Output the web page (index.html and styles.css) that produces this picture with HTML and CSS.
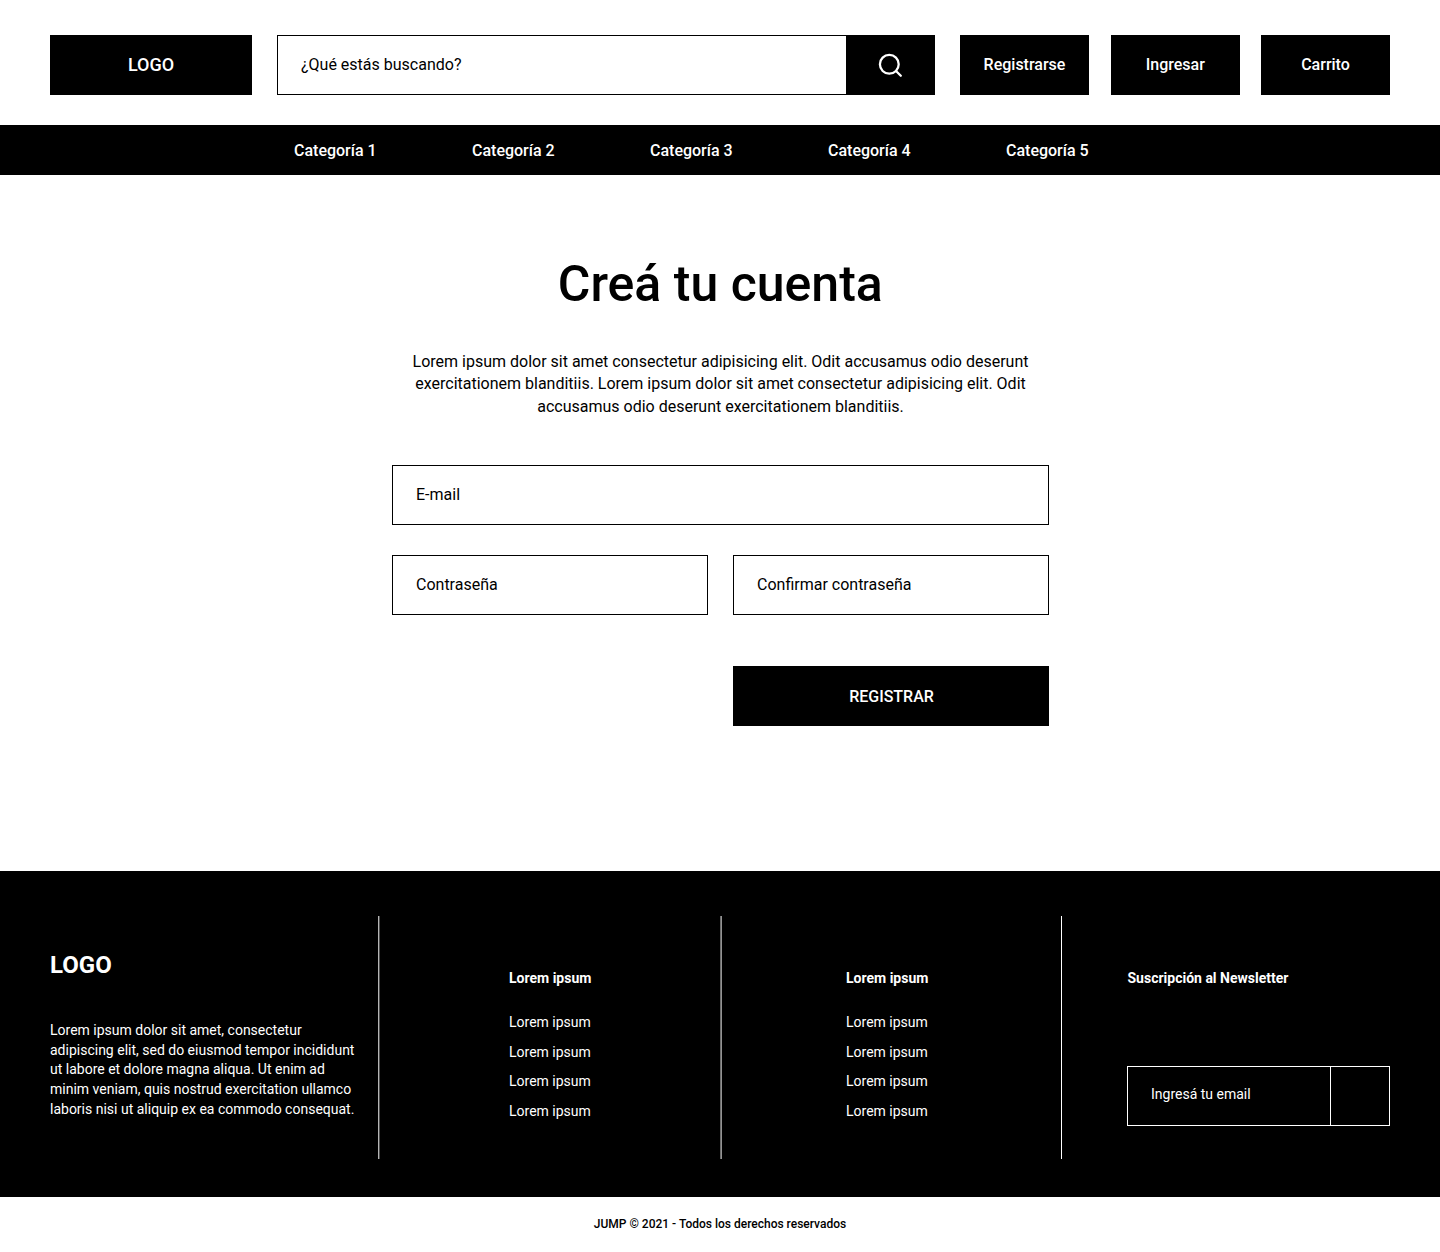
FILE: index.html
```html
<!DOCTYPE html>
<html lang="es">
<head>
<meta charset="utf-8">
<title>Creá tu cuenta</title>
<link rel="stylesheet" href="styles.css">
</head>
<body>
<header class="header">
  <a class="logo">LOGO</a>
  <form class="search">
    <span class="search-field">¿Qué estás buscando?</span>
    <span class="search-button">
      <svg width="26" height="26" viewBox="0 0 26 26" fill="none" stroke="#fff" stroke-width="2.3" stroke-linecap="round"><circle cx="12.3" cy="12.3" r="9.4"/><path d="M19 19L23.8 23.8"/></svg>
    </span>
  </form>
  <div class="actions">
    <a class="action">Registrarse</a>
    <a class="action action-login">Ingresar</a>
    <a class="action">Carrito</a>
  </div>
</header>
<nav class="nav">
  <a>Categoría 1</a><a>Categoría 2</a><a>Categoría 3</a><a>Categoría 4</a><a>Categoría 5</a>
</nav>
<main class="main">
  <h1 class="title">Creá tu cuenta</h1>
  <p class="intro">Lorem ipsum dolor sit amet consectetur adipisicing elit. Odit accusamus odio deserunt<br>exercitationem blanditiis. Lorem ipsum dolor sit amet consectetur adipisicing elit. Odit<br>accusamus odio deserunt exercitationem blanditiis.</p>
  <form class="form">
    <div class="field field-wide">E-mail</div>
    <div class="field">Contraseña</div>
    <div class="field">Confirmar contraseña</div>
    <div class="submit">REGISTRAR</div>
  </form>
</main>
<footer class="footer">
  <section class="about">
    <h2 class="footer-logo">LOGO</h2>
    <p class="about-text">Lorem ipsum dolor sit amet, consectetur<br>adipiscing elit, sed do eiusmod tempor incididunt<br>ut labore et dolore magna aliqua. Ut enim ad<br>minim veniam, quis nostrud exercitation ullamco<br>laboris nisi ut aliquip ex ea commodo consequat.</p>
  </section>
  <section class="links links-first">
    <h3 class="heading">Lorem ipsum</h3>
    <ul class="list"><li>Lorem ipsum</li><li>Lorem ipsum</li><li>Lorem ipsum</li><li>Lorem ipsum</li></ul>
  </section>
  <section class="links links-second">
    <h3 class="heading">Lorem ipsum</h3>
    <ul class="list"><li>Lorem ipsum</li><li>Lorem ipsum</li><li>Lorem ipsum</li><li>Lorem ipsum</li></ul>
  </section>
  <section class="newsletter">
    <h3 class="heading">Suscripción al Newsletter</h3>
    <form class="subscribe"><span class="subscribe-field">Ingresá tu email</span><span class="subscribe-button"></span></form>
  </section>
</footer>
<div class="copyright">JUMP © 2021 - Todos los derechos reservados</div>
</body>
</html>
```
FILE: styles.css
```css
* { box-sizing: border-box; margin: 0; padding: 0; }
body { font: 400 16px/22.4px Roboto, sans-serif; color: #000; background: #fff; }

.header { display: flex; height: 125px; padding: 35px 50px 30px; }
.logo { display: flex; align-items: center; justify-content: center; width: 202px; margin-right: 25px; background: #000; color: #fff; font-size: 18px; font-weight: 500; line-height: 22px; }
.search { display: flex; width: 658px; margin-right: 25px; border: 1px solid #000; line-height: 22px; }
.search-field { flex: 1; display: flex; align-items: center; padding-left: 23px; }
.search-button { display: flex; align-items: center; justify-content: center; width: 88px; background: #000; }
.actions { flex: 1; display: flex; justify-content: space-between; line-height: 22px; }
.action { display: flex; align-items: center; justify-content: center; width: 129px; background: #000; color: #fff; font-weight: 500; }
.action-login { padding-left: 0.6px; }

.nav { display: flex; height: 50px; padding: 1px 0 0 294px; background: #000; color: #fff; font-weight: 500; line-height: 50px; }
.nav a { width: 178px; }

.main { height: 696px; padding-top: 79px; }
.title { padding-left: 0.5px; font-size: 50px; font-weight: 500; line-height: 60px; text-align: center; }
.intro { height: 67px; margin-top: 37px; padding-left: 1px; text-align: center; }
.form { display: grid; grid-template-columns: 316px 316px; gap: 30px 25px; width: 657px; margin: 47px 0 0 392px; }
.field { height: 60px; padding-left: 23px; border: 1px solid #000; line-height: 58px; }
.field-wide { grid-column: 1 / 3; }
.submit { grid-column: 2; height: 60px; margin-top: 21px; padding: 1px 0 0 1px; background: #000; color: #fff; font-weight: 500; line-height: 60px; text-align: center; }

.footer { display: flex; height: 326px; padding: 45px 50px 38px; background: #000; color: #fff; font-size: 14px; line-height: 19.7px; }
.about { width: 329px; padding-top: 34px; border-right: 1px solid #b4b4b4; }
.footer-logo { font-size: 24px; font-weight: 700; line-height: 30px; }
.about-text { margin-top: 41px; }
.links { padding-top: 52px; }
.links-first { width: 342px; padding-left: 129px; border-left: 1px solid #4b4b4b; border-right: 1px solid #6c6c6c; }
.links-second { width: 341px; padding-left: 124px; border-left: 1px solid #939393; border-right: 1px solid #fff; }
.heading { font-size: 14px; font-weight: 700; line-height: 20px; }
.list { margin-top: 20px; list-style: none; line-height: 29.6px; }
.newsletter { flex: 1; padding: 52px 0 0 65px; }
.newsletter .heading { padding-left: 0.5px; }
.subscribe { display: flex; height: 60px; margin-top: 78px; border: 1px solid #fff; }
.subscribe-field { flex: 1; display: flex; align-items: center; padding: 0 0 3px 23px; }
.subscribe-button { width: 59px; border-left: 1px solid #fff; }

.copyright { height: 55px; font-size: 12px; font-weight: 500; line-height: 54px; text-align: center; }
```
